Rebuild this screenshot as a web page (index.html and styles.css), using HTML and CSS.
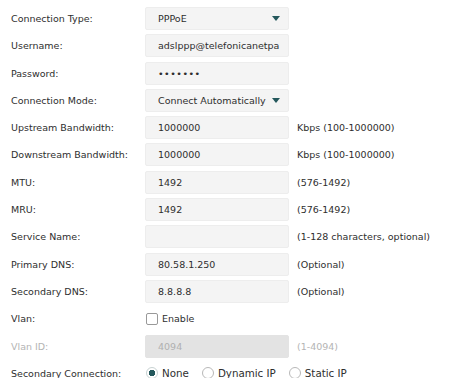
FILE: index.html
```html
<!DOCTYPE html>
<html lang="en">
<head>
    <meta charset="UTF-8">
    <title>PPPoE Settings</title>
    <link rel="stylesheet" href="styles.css">
</head>
<body>
    <form class="wan-form">
        <div class="row">
            <label class="label">Connection Type:</label>
            <div class="field select"><span>PPPoE</span><i class="arrow"></i></div>
        </div>
        <div class="row">
            <label class="label">Username:</label>
            <div class="field">adslppp@telefonicanetpa</div>
        </div>
        <div class="row">
            <label class="label">Password:</label>
            <div class="field dots">&bull;&bull;&bull;&bull;&bull;&bull;&bull;</div>
        </div>
        <div class="row">
            <label class="label">Connection Mode:</label>
            <div class="field select"><span>Connect Automatically</span><i class="arrow"></i></div>
        </div>
        <div class="row">
            <label class="label">Upstream Bandwidth:</label>
            <div class="field">1000000</div>
            <span class="hint">Kbps (100-1000000)</span>
        </div>
        <div class="row">
            <label class="label">Downstream Bandwidth:</label>
            <div class="field">1000000</div>
            <span class="hint">Kbps (100-1000000)</span>
        </div>
        <div class="row">
            <label class="label">MTU:</label>
            <div class="field">1492</div>
            <span class="hint">(576-1492)</span>
        </div>
        <div class="row">
            <label class="label">MRU:</label>
            <div class="field">1492</div>
            <span class="hint">(576-1492)</span>
        </div>
        <div class="row">
            <label class="label">Service Name:</label>
            <div class="field"></div>
            <span class="hint">(1-128 characters, optional)</span>
        </div>
        <div class="row">
            <label class="label">Primary DNS:</label>
            <div class="field">80.58.1.250</div>
            <span class="hint">(Optional)</span>
        </div>
        <div class="row">
            <label class="label">Secondary DNS:</label>
            <div class="field">8.8.8.8</div>
            <span class="hint">(Optional)</span>
        </div>
        <div class="row">
            <label class="label">Vlan:</label>
            <div class="choice"><span class="check"></span>Enable</div>
        </div>
        <div class="row disabled">
            <label class="label">Vlan ID:</label>
            <div class="field">4094</div>
            <span class="hint">(1-4094)</span>
        </div>
        <div class="row">
            <label class="label">Secondary Connection:</label>
            <div class="radios">
                <div class="choice"><span class="radio on"></span>None</div>
                <div class="choice"><span class="radio"></span>Dynamic IP</div>
                <div class="choice"><span class="radio"></span>Static IP</div>
            </div>
        </div>
    </form>
</body>
</html>
```

FILE: styles.css
```css
* {
    margin: 0;
    padding: 0;
    box-sizing: border-box;
}

body {
    font-family: 'DejaVu Sans', Verdana, sans-serif;
    font-size: 9.5px;
    color: #2e2e2e;
    background: #fff;
}

.wan-form {
    display: flex;
    flex-direction: column;
    gap: 4.3px;
    padding: 7px 0 0 11px;
}

.row {
    display: flex;
    align-items: center;
    height: 23px;
}

.label {
    width: 134px;
    flex-shrink: 0;
}

.field {
    width: 144px;
    height: 23px;
    flex-shrink: 0;
    display: flex;
    align-items: center;
    padding: 0 8px 0 12px;
    background: #f4f4f4;
    border: 1px solid #ededed;
    border-radius: 2px;
    white-space: nowrap;
    overflow: hidden;
}

.select {
    justify-content: space-between;
}

.arrow {
    width: 0;
    height: 0;
    border-left: 4px solid transparent;
    border-right: 4px solid transparent;
    border-top: 5px solid #24585c;
}

.dots {
    letter-spacing: 0.5px;
}

.hint {
    margin-left: 8px;
    white-space: nowrap;
}

.disabled .label,
.disabled .hint {
    color: #b4b4b4;
}

.disabled .field {
    background: #e3e3e3;
    border-color: #e3e3e3;
    color: #b0b0b0;
}

.choice {
    display: flex;
    align-items: center;
    gap: 4px;
    padding-left: 1px;
}

.radios {
    display: flex;
    gap: 12px;
    font-size: 10.3px;
}

.check {
    width: 12px;
    height: 12px;
    border: 1px solid #999;
    border-radius: 2px;
    background: #fff;
}

.radio {
    width: 12px;
    height: 12px;
    border: 1px solid #b8b8b8;
    border-radius: 50%;
    background: #fff;
}

.radio.on {
    border-color: #c8d2d2;
    background: radial-gradient(circle, #24585c 0 3px, #fff 3.5px);
}
```
